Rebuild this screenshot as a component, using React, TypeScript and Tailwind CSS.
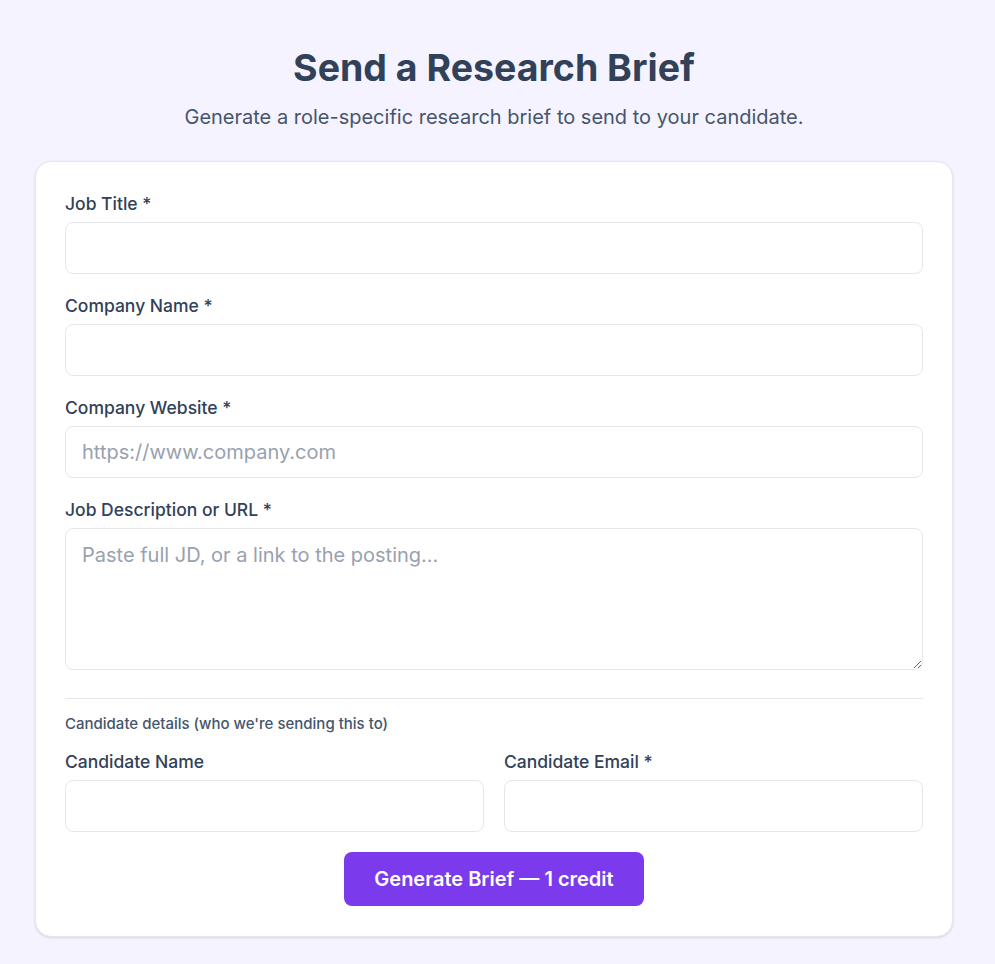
import { useState } from 'react';

const inputClass =
  'w-full rounded-lg border border-gray-200 bg-white px-4 py-3 text-xl leading-7 text-slate-700 placeholder:text-gray-400 outline-none focus:border-violet-400';

function Field({
  label,
  placeholder,
  className = '',
}: {
  label: string;
  placeholder?: string;
  className?: string;
}) {
  const [value, setValue] = useState('');
  return (
    <label className={`flex flex-col gap-1.5 ${className}`}>
      <span className="text-[17.5px] leading-6 font-medium text-slate-700">{label}</span>
      <input
        type="text"
        value={value}
        placeholder={placeholder}
        onChange={(e) => setValue(e.target.value)}
        className={`${inputClass} h-[52px]`}
      />
    </label>
  );
}

export default function App() {
  const [jd, setJd] = useState('');

  return (
    <div
      className="min-h-screen bg-[#f5f3ff] pt-[44px] pr-[7px] pb-7"
      style={{ fontFamily: 'Inter, "Noto Sans", sans-serif' }}
    >
      {/* Header */}
      <div className="text-center">
        <h1 className="text-[37.5px] leading-[48px] font-bold text-slate-700">Send a Research Brief</h1>
        <p className="mt-[11px] text-xl leading-7 text-slate-600">
          Generate a role-specific research brief to send to your candidate.
        </p>
      </div>

      {/* Form card */}
      <form
        className="mx-auto mt-[30px] w-[918px] rounded-2xl border border-gray-200 bg-white px-[29px] pt-[30px] pb-[30px] shadow-sm"
        onSubmit={(e) => e.preventDefault()}
      >
        <div className="flex flex-col gap-5">
          <Field label="Job Title *" />
          <Field label="Company Name *" />
          <Field label="Company Website *" placeholder="https://www.company.com" />
          <label className="flex flex-col gap-1.5">
            <span className="text-[17.5px] leading-6 font-medium text-slate-700">
              Job Description or URL *
            </span>
            <textarea
              value={jd}
              onChange={(e) => setJd(e.target.value)}
              placeholder="Paste full JD, or a link to the posting..."
              className={`${inputClass} h-[142px] resize-y`}
            />
          </label>
        </div>

        <div className="mt-7 border-t border-gray-200 pt-[15px]">
          <p className="text-[15px] leading-5 font-medium text-slate-600">
            Candidate details (who we're sending this to)
          </p>
          <div className="mt-4 grid grid-cols-2 gap-5">
            <Field label="Candidate Name" />
            <Field label="Candidate Email *" />
          </div>
        </div>

        <div className="mt-5 flex justify-center">
          <button
            type="submit"
            className="h-[54px] w-[300px] rounded-lg bg-[#7c3aed] text-xl font-semibold text-white hover:bg-violet-700"
          >
            Generate Brief — 1 credit
          </button>
        </div>
      </form>
    </div>
  );
}
